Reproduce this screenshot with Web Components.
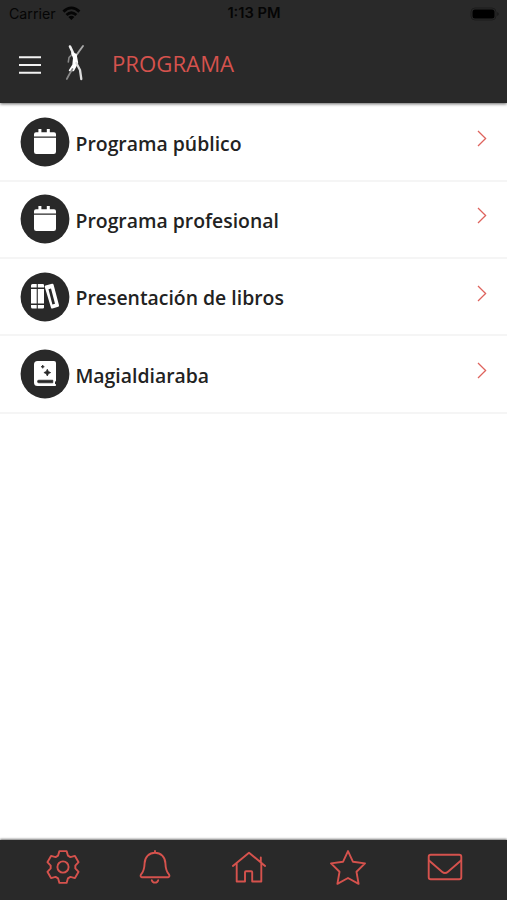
<!DOCTYPE html>
<html lang="es"><head><meta charset="utf-8"><title>Programa</title>
<style>html,body{margin:0;height:100%;background:#fff}</style></head>
<body><program-app></program-app>
<script>
const define=(name,html,setup)=>customElements.define(name,class extends HTMLElement{
  connectedCallback(){
    if(this.shadowRoot)return;
    this.attachShadow({mode:'open'}).innerHTML=html;
    if(setup)setup(this);
  }
});
const rot=(x,y,d)=>{const a=d*Math.PI/180;return (x*Math.cos(a)-y*Math.sin(a)).toFixed(2)+' '+(x*Math.sin(a)+y*Math.cos(a)).toFixed(2)};
const gear='M'+[0,60,120,180,240,300].flatMap(d=>[[-4.9,-11.4],[-3.6,-15.9],[3.6,-15.9],[4.9,-11.4]].map(p=>rot(p[0],p[1],d))).join('L')+'Z';
const line='fill="none" stroke="currentColor" stroke-width="1.9" stroke-linejoin="round" stroke-linecap="round"';
const calendar='<path fill="#fff" d="M-6.6-13h3v3.2h5.4v-3.2h3v3.2H9q2 0 2 2v2.2H-11v-2.2q0-2 2-2h2.4zM-11-4.3H11V9.7q0 2.3-2.3 2.3H-8.7q-2.3 0-2.3-2.3z"/>';
const glyphs={
  calendar,
  books:`<g fill="#fff"><path d="M-14-11.5q0-1.5 1.5-1.5h4.2v3.5H-14zM-14-8h5.7V6.5H-14zM-14 8h5.7v3.6h-4.2q-1.5 0-1.5-1.5zM-7.2-13h5q1.2 0 1.2 1v2.5H-7.2zM-7.2-8h6.2V6.5H-7.2zM-7.2 8h6.2v2.6q0 1-1.2 1h-5z"/><path fill-rule="evenodd" d="M-.3-10.3q-.2-1 .8-1.3l6.5-1.6q1.2-.3 1.6.9L14 8.2q.3 1.2-.8 1.6L7.5 11.5q-1.2.3-1.5-.8zM3.5-7.8L7.4 7.6l2.6-.8L6-8.5z"/></g>`,
  magic:`<path fill="#fff" d="M-7.5-13H9q2 0 2 2V6.4q0 .8-1 1.3V10h.3q.7 0 .7.8v.4q0 .8-.8.8H-7.5Q-11 12-11 8.5v-18Q-11-13-7.5-13z"/><g fill="#292929"><path d="M-6.2 6.2H7.8v2.6H-6.2q-1.3 0-1.3-1.3t1.3-1.3zM2.3-4.8l1.1 2.3 2.3 1.1-2.3 1.1L2.3 2 1.2-.3-1.1-1.4l2.3-1.1zM-2.3-8.9l.5 1.1 1.1.5-1.1.5-.5 1.1-.5-1.1-1.1-.5 1.1-.5z" stroke="#292929" stroke-width=".7"/></g>`
};
const tabs={
  gear:`<path ${line} d="${gear}"/><circle r="5.6" ${line}/>`,
  bell:`<path ${line} d="M0-16V-14.5M-13.3 10.2H13.3Q15 9.5 14.1 7.6C11.5 4.8 10.6 2.5 10.4-3.8C10.2-10 5.8-14.3 0-14.3S-10.2-10-10.4-3.8C-10.6 2.5-11.5 4.8-14.1 7.6Q-15 9.5-13.3 10.2zM-3.2 13.2Q-2.6 15.6 0 15.6T3.2 13.2"/>`,
  home:`<path ${line} d="M-16.1-1L0-14.3 16.1-1M-12.3-3.8V14.5H-4V5.3Q-4 4.3-3 4.3H2.2Q3.2 4.3 3.2 5.3V14.5H12.3V-3.8M11.8-9.5V-5"/>`,
  star:`<path ${line} d="M0-15.9L5-5.2 17-3.6 8.5 4.8 10.6 16.8 0 11 -10.6 16.8-8.5 4.8-17-3.6-5-5.2z"/>`,
  mail:`<rect x="-16.3" y="-12.2" width="32.6" height="24.4" rx="2" ${line}/><path ${line} d="M-16-6.5L-3 4.8Q0 7.3 3 4.8L16-6.5"/>`
};
define('status-bar',`<style>
:host{display:grid;grid-template-columns:1fr auto 1fr;align-items:center;height:27px;color:#050505;font:14.2px/27px Inter,sans-serif;padding:0 8px 0 9px}
.l{display:flex;align-items:center;gap:6px}.t{font-weight:600;font-size:14.7px}.b{justify-self:end;display:block}svg{display:block}
</style><span class="l"><span>Carrier</span><svg width="19" height="15" viewBox="0 0 19 15"><g fill="none" stroke="currentColor" stroke-width="2.8"><path d="M1.4 5.6Q9.4-1.8 17.4 5.6M4.5 9Q9.4 4.3 14.3 9"/></g><path fill="currentColor" d="M6.4 11Q9.4 8.5 12.4 11L9.4 14z"/></svg></span><span class="t">1:13 PM</span><svg class="b" width="29" height="14" viewBox="0 0 29 14"><rect x="1" y="1" width="25" height="12" rx="4" fill="none" stroke="#1c1c1c"/><rect x="2.5" y="2.5" width="22" height="9" rx="2.5" fill="#000"/><path d="M27.5 5v4q2-2 0-4" fill="#111"/></svg>`);
define('app-header',`<style>
:host{display:block;height:103px;background:#292929;box-shadow:0 1px 3px #0009;position:relative}
.bar{display:flex;align-items:center;height:75px;padding-left:19px}
.menu{margin-top:1px}.logo{margin:-5px 0 0 22px}svg{display:block}
h1{margin:-2px 0 0 25px;font:400 22.2px/30px "Open Sans",sans-serif;color:#d5524d}
</style><status-bar></status-bar><div class="bar"><svg class="menu" width="22" height="20" viewBox="0 0 22 20"><path d="M0 2.3H22M0 10H22M0 17.7H22" stroke="#f2f2f2" stroke-width="1.9"/></svg>
<svg class="logo" width="24" height="38" viewBox="64 42 24 38"><defs><filter id="s"><feGaussianBlur stdDeviation=".5"/></filter></defs><g filter="url(#s)" fill="none" stroke-linecap="round" stroke-linejoin="round"><path d="M71 45.5L74.3 52.5" stroke="#eee" stroke-width="2.6"/><path d="M76.5 55.5L80 50.5 84 45" stroke="#aaa" stroke-width="1.9"/><path d="M73.5 53L70 56.5 69.3 61" stroke="#888" stroke-width="1.6"/><path d="M72.8 52L77 53.5 78.5 62 74.5 69.5 70.5 69.5 74 64 74.7 57z" fill="#fff" stroke="#fff" stroke-width="1.4"/><path d="M77.3 62L81 69 82.3 78" stroke="#ddd" stroke-width="2.3"/><path d="M73.5 68L70.5 73 67.8 78" stroke="#888" stroke-width="1.7"/></g></svg><h1><slot></slot></h1></div>`);
define('list-row',`<style>
:host{display:flex;box-sizing:border-box;height:77.33px;border-bottom:2px solid #f5f5f5;padding:0 20px 0 20px;align-items:center}
svg{display:block;flex:none}.label{flex:1;margin:3px 0 0 5.5px;font:600 19.4px/28px "Open Sans",sans-serif;color:#222}.chev{margin-bottom:7px}
</style><svg width="50" height="50" viewBox="-25 -25 50 50"><circle r="24.4" fill="#292929"/><g id="g"></g></svg><span class="label"><slot></slot></span><svg class="chev" width="10" height="17" viewBox="0 0 10 17"><path d="M1 1L8.6 8.5 1 16" fill="none" stroke="#de635d" stroke-width="1.3"/></svg>`,
 el=>el.shadowRoot.getElementById('g').innerHTML=glyphs[el.getAttribute('icon')]);
define('tab-icon',`<style>:host{display:block;width:38px;height:38px;color:#d5524d}svg{display:block}</style><svg width="38" height="38" viewBox="-19 -19 38 38"></svg>`,
 el=>el.shadowRoot.querySelector('svg').innerHTML=tabs[el.getAttribute('icon')]);
define('tab-bar',`<style>:host{display:flex;justify-content:space-between;box-sizing:border-box;height:60px;background:#292929;padding:8px 43.5px 0 44px;box-shadow:0 -1px 2px #0008}
</style><tab-icon icon="gear"></tab-icon><tab-icon icon="bell" style="margin-left:-3px"></tab-icon><tab-icon icon="home" style="margin-left:-2px"></tab-icon><tab-icon icon="star" style="margin:0 1px 0 4px"></tab-icon><tab-icon icon="mail"></tab-icon>`);
define('program-app',`<style>:host{display:flex;flex-direction:column;height:100vh;background:#fff;overflow:hidden}main{flex:1;padding-top:1.4px}</style>
<app-header>PROGRAMA</app-header><main><list-row icon="calendar">Programa público</list-row><list-row icon="calendar">Programa profesional</list-row><list-row icon="books">Presentación de libros</list-row><list-row icon="magic">Magialdiaraba</list-row></main><tab-bar></tab-bar>`);
</script></body></html>
